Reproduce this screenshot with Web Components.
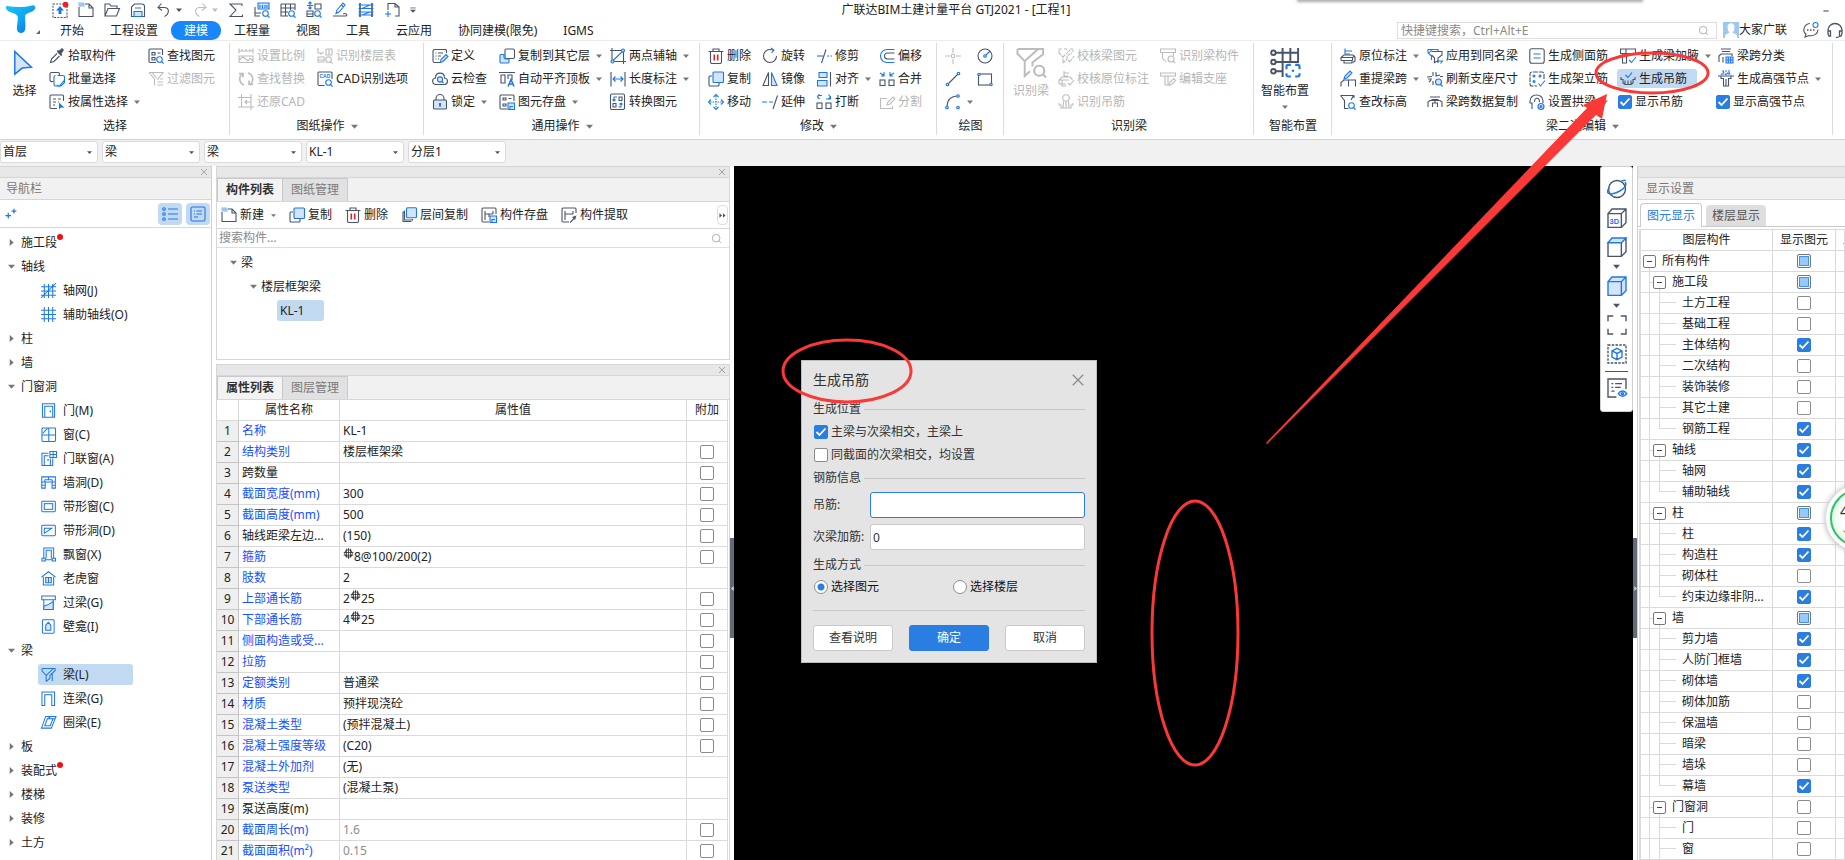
<!DOCTYPE html>
<html lang="zh-CN">
<head>
<meta charset="utf-8">
<title>广联达BIM土建计量平台 GTJ2021 - [工程1]</title>
<style>
body { margin: 0; }
</style>
</head>
<body>
<gtj-app></gtj-app>
<script>
/* ---------- icon shapes: 16x16 grid; b = accent stroke, f = tinted fill, s = solid accent, k = solid dark ---------- */
const MAG = '<circle class="b" cx="11.5" cy="11.5" r="2.8"/><path class="b" d="M13.6 13.6l2 2"/>';
const ICONS = {
  upload: '<rect x="1" y="2" width="14" height="13.5" stroke-dasharray="2 1.2"/><path class="s" d="M8 4l4 4.5H9.5V12h-3V8.500H4z"/><circle cx="13.500" cy="2.600" r="2.900" fill="#e8202a" stroke="none"/>',
  newfile: '<path d="M1 5v9.500h14V6l-4-4H7M11 2v4h4"/><path class="b" stroke-dasharray="1 1" stroke-width="1" d="M.5 1h5M1.500 2h5M.5 3h5M1.500 4h5"/>',
  open: '<path d="M1 14V2h4.500l1.500 2h6v2.500M1 14h11.500L15.500 6.500H4z"/>',
  save: '<path d="M1.500 14.500V5l3-3H12a2.500 2.500 0 0 1 2.500 2.500v10z"/><path class="b f" d="M4 14.500V9.500h8v5zM5 6h6"/>',
  undo: '<path d="M5.500 1.500L2 5.500l4 3M2.500 5.500H8c6 0 5.500 6.500.5 9"/>',
  redo: '<path d="M10.500 1.500L14 5.500l-4 3M13.500 5.500H8c-6 0-5.500 6.500-.5 9"/>',
  sigma: '<path d="M14 4V2H2l6 6-6 6.500h12.500v-2"/>',
  q1: '<path d="M1 5v9h5M1 11h6"/><path class="b f" d="M4 1h11v6H4zM6 3v3M8.500 3v3M11 3v3M13 3v3"/>' + MAG,
  q2: '<path d="M1 2h14v6M1 2v12h7M1 6h14M1 10h7M5.500 2v12M10.500 2v6"/>' + MAG,
  q3: '<path d="M9 2h6v5H9zM1 9h6v5.500H1zM1 12h6"/><path class="b" d="M4 0v7M1 3.500h6M2.500 1.500L4 0l1.500 1.500M2.500 5.500L4 7l1.500-1.500"/>' + MAG,
  q4: '<path d="M1 14h13c2.500-2-1-3-3-2"/><path class="b" d="M5 8l6-7 2 2-6 7-3 1.500zM9.500 3l2 2"/>',
  q5: '<path stroke-width="1.600" d="M2 1v14M14 1v14"/><path class="b" d="M.5 3h15M.5 6.500h15M.5 10h15M.5 13h15M12 3L4 6.500M12 10l-8 3"/>',
  q6: '<path d="M4 8V1.500h7l4 3.500v9h-4M11 1.500V5h4"/><path class="b" d="M4 9v6M1 12h6"/>',
  grip: '<path class="k" d="M0 12L12 12 12 0z"/>',
  cursor: '<path class="b f" stroke-width="1.600" d="M3 1.500L3 26 11 19.500 21 18.500z"/>',
  picker: '<path class="k" d="M8 4l4 4 1.500-1-1-1.500 2.500-3.500L13 0 10 2.500 8.500 2z"/><path d="M8 5.500L2.500 11l-1 3.500L5 13.500 10.500 8"/>',
  batch: '<path d="M4.500 10.500H3A1.500 1.500 0 0 1 1 9V3a1.500 1.500 0 0 1 1.500-1.500H9A1.500 1.500 0 0 1 10.500 3v1"/><path class="b" d="M8.500 4.500H14A1.500 1.500 0 0 1 15.500 6v5.500L12 15H6.500A1.500 1.500 0 0 1 5 13.500V6A1.500 1.500 0 0 1 6.500 4.500M8 14l2 1.500 5-6"/>',
  propselect: '<path d="M8 14.500H2a1 1 0 0 1-1-1V2a1 1 0 0 1 1-1h11.500a1 1 0 0 1 1 1v5M4 5h3M9 5h3M4 8h3M4 11h2M9 8h1"/><path class="s" d="M10 8.500v7l2-2 3.500.3z"/>',
  findelem: '<path d="M8 14.500H2a1 1 0 0 1-1-1V2a1 1 0 0 1 1-1h11.500a1 1 0 0 1 1 1v5M4 4.500h3v2.500H4zM4 9.500h3v2.500H4zM9.500 5h3"/>' + MAG,
  filter: '<path d="M1 1.500h14L10 8v1M1 1.500L6.500 8v6.500M9.500 11H15M9.500 14H15M12 8h3M4 1.500L8.500 7"/>',
  scale: '<path d="M1 3h14M1 .5v5M15 .5v5M1 14.500V8h14v6.500M1 14.500h14M1 12l4-3 5 4 2-3 3 3M4 1v2M8 1v2M12 1v2"/>',
  swap: '<path stroke-width="1.600" d="M6 14A6.500 6.500 0 0 1 4 3M1 2.500h4v4M10 2a6.500 6.500 0 0 1 2 11.500M15 13.500h-4v-4"/>',
  crop: '<path d="M3.500 0v13H16M0 3.500h13V16M0 13h3.500M13 0v3.500M7 8h6M9 6L7 8l2 2"/>',
  floorsheet: '<path d="M1 0v5h6M1 9h6v5H1zM9 1h6v6M9 1v6h6M12 1v6M1 12h6M4 5v2"/>' + MAG,
  cad: '<path d="M7.500 14.500H2a1 1 0 0 1-1-1V2a1 1 0 0 1 1-1h12a1 1 0 0 1 1 1v6"/><text x="2.500" y="7" font-size="5" font-weight="700">CAD</text>' + MAG,
  define: '<path d="M8 14.500H2.500a1.500 1.500 0 0 1-1.500-1.500V3a1.500 1.500 0 0 1 1.500-1.500h10A1.500 1.500 0 0 1 14.500 3v2M3.500 5h1M6 5h5M3.500 8h1M6 8h3M3.500 11h1M6 11h1"/><path class="b f" d="M8.500 14.500l.5-3 5-5 2 2-5 5z"/>',
  cloud: '<path d="M4 13.500C-.5 13-.3 7.500 3.500 7 3.500.5 12.500.5 12.500 7c4 .5 4 6 0 6.500z"/><circle class="b f" cx="8" cy="8.500" r="2.600"/><path class="b" d="M10 10.500l1.500 1.500"/>',
  lock: '<path d="M4 6V4.500a4 4 0 0 1 8 0V6"/><rect class="f" x="1.500" y="6" width="13" height="9" rx="1"/><path class="b" stroke-width="2" d="M8 9v3.500"/>',
  copyfloor: '<rect x="6" y="1" width="9.500" height="9.500" rx="1.500"/><path class="b f" d="M5 6.500H2A1 1 0 0 0 1 7.500V14a1 1 0 0 0 1 1h7a1 1 0 0 0 1-1v-3H6.500A1.500 1.500 0 0 1 5 9.500z"/>',
  aligntop: '<path d="M0 1.500h16M2 4h4v8H2zM9 8V4h4v5"/><path class="b" stroke-width="1.500" d="M9 15.500l3-7 3 7M10.500 13h3.500"/>',
  archive: '<path d="M8 15H2a1 1 0 0 1-1-1V2a1 1 0 0 1 1-1h12a1 1 0 0 1 1 1v5M4 4h3v2H4zM4 10h3v2H4zM9.500 4.500h3"/><path class="b f" d="M9 9h6.500v6.500H9zM11 15v-2.500h3"/>',
  axis2: '<path d="M2 0v15M13.500 1v15M0 2.500h15M1 13.500h15"/><path class="b" d="M2.500 13L13 3"/><circle class="b f" cx="13" cy="2.500" r="1.500"/><circle class="b f" cx="2.500" cy="13.500" r="1.500"/>',
  dimension: '<path d="M1 1v14.500M15 1v14.500"/><path class="b" d="M3 8h10M5.500 5.500L3 8l2.500 2.500M10.500 5.500L13 8l-2.500 2.500"/>',
  convert: '<path d="M2 0h11a1.500 1.500 0 0 1 1.500 1.500v12.500a1.500 1.500 0 0 1-1.500 1.500H2A1.500 1.500 0 0 1 .5 14V1.500A1.500 1.500 0 0 1 2 0zM9 3h3v3.500H9zM3 9.500h3V13H3z"/><path class="b" d="M7 3H4v4M2.500 5.500L4 7l1.500-1.500M8.500 13H11V9M9.500 10.500L11 9l1.500 1.500"/>',
  trash: '<path d="M.5 3.500h15M5 3V1h6v2M2.500 3.500V14a1.500 1.500 0 0 0 1.500 1.500h8a1.500 1.500 0 0 0 1.500-1.500V3.500"/><path style="stroke:#d9252f" stroke-width="1.600" d="M6.300 6.500v6M9.700 6.500v6"/>',
  copy: '<path d="M4 5H2a1 1 0 0 0-1 1v8a1 1 0 0 0 1 1h8a1 1 0 0 0 1-1v-2"/><rect class="b f" x="5" y="1" width="10.500" height="10.500" rx="1"/>',
  copylayers: '<path d="M3 5H2v9.500h8V14M4 4H3.500v9h8v-1"/><rect class="b f" x="5.500" y=".8" width="10" height="10" rx="1"/>',
  move: '<g class="b"><path stroke-dasharray="1.500 1" d="M8 2v12M2 8h12"/><path d="M5.500 3L8 .5 10.500 3M5.500 13L8 15.500l2.500-2.500M3 5.500L.5 8 3 10.500M13 5.500L15.500 8 13 10.500"/></g>',
  rotate: '<circle cx="8" cy="8" r="6.500" stroke-dasharray="33 8"/><path class="b" d="M9 0l3 2-2.500 3"/>',
  mirror: '<path class="b f" d="M9.500 1.500L15 14.500H9.500z"/><path d="M6.500 1.500L1 14.500h5.500z"/>',
  extend: '<path d="M15.500 1.500L11 15"/><path class="b" d="M0 8h5M7 8h4"/>',
  trim: '<path d="M10 1.500L5.500 15"/><path class="b" d="M1 8h6"/><path class="b" d="M11 8h2M14.500 8H16"/>',
  align: '<path d="M14.500 1v14.500"/><path class="b f" d="M3 1.500h8v5H3zM1.500 9.500H11V15H1.500z"/>',
  break: '<rect x="1" y="9" width="5" height="5.500"/><rect x="10" y="9" width="5" height="5.500"/><path class="b" d="M6 1.500H1.500M3.500 0L1.500 3l2 2M10 5h4.500V2M12.500 .5l2 2.500-2 2"/>',
  merge: '<rect x="1" y="9" width="5" height="5.500"/><rect x="10" y="9" width="5" height="5.500"/><path class="b" d="M1 2l4 2.500M5 1v4H2M15 2l-4 2.500M11 1v4h3"/>',
  offset: '<path d="M15.500 5H8.500a3 3 0 0 0 0 6h7"/><path class="b" d="M15.500 1.500H8a6.500 6.500 0 0 0 0 13h7.500"/>',
  split: '<path d="M8 4.500H1.500v10h12V12"/><path d="M8 11l1-3 5-5 2 2-5 5z"/>',
  point: '<path d="M8 0v5M8 11v5M0 8h5M11 8h5"/><circle cx="8" cy="8" r="1.800"/>',
  circle: '<circle cx="8" cy="8" r="7"/><path class="b" d="M9 7l4-4"/><circle class="b f" cx="8" cy="8" r="1.300"/>',
  line: '<path d="M2.500 13.500l11-11"/><circle class="b f" cx="2.500" cy="13.500" r="1.300"/><circle class="b f" cx="13.500" cy="2.500" r="1.300"/>',
  rect: '<rect x="1.500" y="3" width="13" height="11"/><circle class="b f" cx="2" cy="3.500" r="1.200"/><circle class="b f" cx="14" cy="13.500" r="1.200"/>',
  arc: '<path d="M2 12C2.500 5 6 2.500 11.500 2"/><circle class="b f" cx="2" cy="13.500" r="1.300"/><circle class="b f" cx="13" cy="2" r="1.300"/><circle class="b f" cx="13" cy="13.500" r="1.300"/>',
  beambig: '<path stroke-width="2" d="M1.500 2H28v5.500L17 16v4M1.500 2v5L9 14.500V30l5.500-5M9 14.500L23 2"/><circle stroke-width="2.200" cx="24" cy="24.500" r="5.200"/><path stroke-width="2.200" d="M28 28.500l3 3"/>',
  chkbeam: '<path d="M1 5V1h3M6 1h4M12 1h3v3M1 5l4 4v6M5 15l4-4M5 9l7-7M9 11V8l5-3M10 12l2 2 4-6" stroke-dasharray="3 .8"/>',
  chkmark: '<path d="M6 0v6M6 2h5M6 5h4M1 13V9l3-3h8l2 2v1M1 9h10M1 13h7M4 9v6h4M10 12l2 2 4-5"/>',
  hanger: '<circle cx="8" cy="4" r="3.300"/><path d="M8 7.500V14M1 9v2h2v3h10v-3h2V9M5.500 7.500L5 14M10.500 7.500L11 14"/>',
  beamcomp: '<path d="M.5 1h15v3.500H.5zM2.500 4.500V10L6 14M13.500 4.500V8"/><circle cx="11" cy="11" r="3"/><path d="M13 13l2 2"/>',
  editsupport: '<path d="M.5 2h15v3H.5zM5 5v9h3V5"/><path d="M9 14.500l.7-3 4-4 2 2-4 4z"/>',
  smart: '<path stroke-width="2" d="M6 6h24M6 15.500h24M6 25h7M13 1v30M21 1v14M29 1v14"/><circle stroke-width="2" cx="3.500" cy="6" r="2.300"/><circle stroke-width="2" cx="3.500" cy="15.500" r="2.300"/><circle stroke-width="2" cx="3.500" cy="25" r="2.300"/><rect fill="#fff" stroke="none" x="16" y="17.500" width="16" height="15"/><path class="b" stroke-width="2.200" d="M17 23v-2.500a2 2 0 0 1 2-2h2.500M26 18.500h2.500a2 2 0 0 1 2 2V23M30.500 27v1.500a2 2 0 0 1-2 2H26M21.500 30.500H19a2 2 0 0 1-2-2V27"/><circle class="s" cx="23.700" cy="24.500" r="1.300"/>',
  inplace: '<path class="b" d="M5 6.500V.5M5 3h7M5 6h5"/><path d="M1 12.500V9.500L4 7h9l2 2v4l-2 1.500M1 9.500h11.500M12.500 9.500v3M4 12.500V15h8v-2.500H1M12.500 9.500L15 8"/>',
  relift: '<path class="b f" d="M4 8l1-3 5-5 2 2-5 5z"/><path d="M1 15.500v-4L4 9h11.500v6.500M8.500 9v6.500"/>',
  level: '<path d="M.5 1.500h13L11 6M.5 1.500l4 5v8h4M14 1.500V4"/>' + MAG,
  applysame: '<path class="b" d="M1 5V1.500h10V4M1 5l3.500 3V12M5 1.500L2 5"/><path d="M4.500 3.500h10.500V7l-4 3v5M4.500 7l3 3v4.500l3-1.500"/><path class="b" d="M10 13h5.500l-2 2.500"/>',
  refresh: '<path d="M0 6l5-.5M6 5V1M9 1v4l4-1M4 9l-2 2M13 5.500h3M6 10v4M1 8h4"/><circle class="b f" cx="11.500" cy="11" r="3"/><path class="b" d="M13.600 13.500l2 2"/>',
  spancopy: '<path d="M3 3h10M4.500 5.500h7M1 13V8l2-1.500h10L15 8v5M5.500 13V9h5v4M8 6.500V9"/>',
  sidebar: '<rect x=".8" y=".8" width="14.400" height="14.400" rx="2"/><path class="b" d="M4.500 6h7M4.500 10h7"/>',
  erect: '<path d="M15 8V3a2 2 0 0 0-2-2H3a2 2 0 0 0-2 2v10a2 2 0 0 0 2 2h5" stroke-dasharray="5 1"/><g class="b f"><circle cx="5" cy="5" r="1"/><circle cx="11" cy="5" r="1"/><circle cx="5" cy="10.500" r="1"/></g><path class="b" d="M9.500 12.500l2 2.500L16 9.500"/>',
  arch: '<path d="M3 15V9H1V7C2-1 13-1 14 7v2M5.500 8c0-5 5-5 5 0"/><circle class="b f" cx="12" cy="12.500" r="3"/><circle class="b" cx="12" cy="12.500" r="1"/>',
  haunch: '<path d="M.5 1h15v4.500H.5zM2.500 5.500V15h4V9l3-3.500M6 1v4.500"/><path class="b" d="M9 12l2.500 2.500L16 9"/>',
  genhanger: '<path class="b" d="M5.500 4L8 6.500 12 1.500"/><path d="M1 6v2.500h2V12l2 1.500h6l2-1.500V8.500h2V6M5 9.500v4M8 9.500v4M11 9.500v4"/>',
  spanclass: '<path d="M3 1h10M4 3.500h8M1 14V8l2-2h11v2M5 14.500V9"/><path class="b f" d="M8 9h7v6H8zM8 12h7M10.300 9v6M12.700 9v6"/>',
  node: '<path class="b" stroke-dasharray="2 1" d="M4 0h9M4 3h9M3 4l2.500-3L8 4l2.500-3L13 4"/><path d="M0 5h16M3 5v2.500h2.500V15h5V7.500H13V5M8 8v7"/>',
  plus2: '<path class="b" stroke-width="1.500" d="M4 7v7M.5 10.500h7M11 2v6M8 5h6"/>',
  list: '<g class="b"><circle cx="2" cy="3" r="1.300"/><circle cx="2" cy="8" r="1.300"/><circle cx="2" cy="13" r="1.300"/><path d="M6 3h10M6 8h10M6 13h10"/></g>',
  card: '<rect class="b" x="1" y="1" width="14" height="14" rx="1.500"/><path class="b" d="M4 5h1M6.500 5H12M4 8h1M6.500 8H12M4 11h4"/>',
  axisnet: '<path class="b" d="M3.500 1v15M8 1v15M12.500 1v15M0 4h16M0 8.500h16M0 13h16M0 16L16 0"/>',
  axisaux: '<path class="b" d="M3.500 0v16M8 0v16M12.500 0v16M0 3.500h16M0 8h16M0 12.500h16"/>',
  door: '<path class="b" d="M1.500.8h13v14.400h-13zM4 15V3.500h8.500V15"/><circle class="s" cx="10" cy="9" r=".9"/>',
  window: '<rect class="b" x="1" y="1" width="14.500" height="14.500" rx="1"/><path class="b" d="M1 8.500h14.500M8.300 1v14.500M2 6.500L7 1.500"/>',
  doorwin: '<path class="b" d="M8 2.500H1v13h2.500V5H8M3.500 15.500h9V8M10 15V8M9.500.5h7v6.500h-7zM13 .5V7M9.500 3.700h7"/><circle class="s" cx="7.500" cy="9.500" r=".9"/>',
  wallhole: '<path class="b" d="M.8 2h14.500v12h-3.500V7.500H4.500V14H.8zM.8 7.500H4.500M11.800 7.500h3.500M8 2v3M4 5h8M4 5v2M12 5v2M.8 11h3.500M11.500 11h3.500"/>',
  stripwin: '<rect class="b" x=".8" y="2.500" width="14.500" height="11" rx="1"/><rect class="b" x="3.500" y="5" width="9" height="6"/>',
  striphole: '<rect class="b" x=".8" y="2.500" width="14.500" height="11" rx="1"/><path class="b" d="M3.500 11V5.500h8z"/>',
  baywin: '<path class="b" d="M3 12V1h10.500v11M5.500 12V3.500H11V12M1 12h3.500v3H1zM12 12h3.500v3H12zM5 13.500h7"/>',
  dormer: '<path class="b" d="M.5 6.500L8 .8l7.500 5.700M2.500 6v9h11V6"/><path class="b f" d="M5 7h6v5.500H5zM8 7v5.500"/>',
  lintel: '<path class="b" d="M.8 1h14.500v4H.8z"/><path class="b" d="M3 5v10.500h10V5"/><path class="b f" d="M3 12c4-1 7-3 10-5v8.500H3z"/>',
  niche: '<rect class="b" x="1.500" y=".8" width="12.500" height="14.400" rx="1"/><path class="b f" d="M5 12V6.500L7.800 3.500l2.700 3V12z"/>',
  beam: '<path class="b" d="M1 1.500h14v2.500L9.500 9M1 1.500V4l4.500 5v6.500M5.500 9l8-7.500M5.500 15.500l4-3.500V9M12 7v8"/>',
  coupling: '<path class="b" d="M1 15.500V1h13.500v14.500h-3V4H4v11.500z"/>',
  ring: '<path class="b" d="M5 1.500h11l-5 12.500H.5zM6.800 4h6l-3 7.500H4zM11 1.500L7 4M13 4l2 0"/>',
  orbit: '<circle cx="8" cy="8" r="6.800"/><path class="b" stroke-width="1.200" d="M14.500 2.500c2 3-2 6-5 7.500s-8 3-9 .8C0 9 1 8 2 7M15 1l-3.500.5"/>',
  c3d: '<path d="M.8 4.500h10.700v11H.8zM.8 4.500L4 .8h11.200v11l-3.700 3.700M11.500 4.500L15.200.8"/><text x="2" y="13" font-size="6" font-weight="700">3D</text>',
  cubetop: '<path d="M.8 4.500h10.700v11H.8zM15.200.8v11l-3.700 3.700M11.500 4.500L15.200.8"/><path class="b f" d="M.8 4.500L4 .8h11.200l-3.700 3.700z"/>',
  cubesolid: '<path class="b f" d="M.8 4.500L4 .8h11.200v11l-3.700 3.700H.8zM.8 4.500h10.700v11M11.500 4.500L15.200.8"/>',
  expand: '<path d="M.8 5V.8H5M11 .8h4.200V5M15.200 11v4.200H11M5 15.200H.8V11"/>',
  dashcube: '<rect x=".8" y=".8" width="14.400" height="14.400" stroke-dasharray="2 1"/><path class="b" d="M8 3.500l4 2v5l-4 2-4-2v-5zM4 5.500l4 2 4-2M8 7.500v5"/>',
  listeye: '<path d="M7.500 15.200H.8V.8h14.400v8M3.500 4.500H5M6.500 4.500H12M3.500 7.500H5M6.500 7.500H11M3.500 10.500H6"/><path class="b f" d="M9 12.500c2-2.800 5-2.800 6.800 0-1.800 2.800-4.800 2.800-6.800 0z"/><circle class="b" cx="12.400" cy="12.500" r=".8"/>',
  compsave: '<path d="M8 15H2a1 1 0 0 1-1-1V2a1 1 0 0 1 1-1h12a1 1 0 0 1 1 1v5M4 4v9M4 7h8M12 4v3M8 10V7"/><path class="b f" d="M9 9h6.500v6.500H9zM11 15v-2.500h3"/>',
  compget: '<path d="M8 15H2a1 1 0 0 1-1-1V2a1 1 0 0 1 1-1h12a1 1 0 0 1 1 1v4M4 4v9M4 7h8M12 4v3"/><path class="k" d="M11 10l3 3 1.500-4.500z"/><path d="M9 15.500l4-4"/>',
  search: '<circle cx="7.500" cy="7.500" r="5.500"/><path d="M11.500 11.500l3 3"/>',
  close: '<path stroke-width="1.400" d="M2 2l12 12M14 2L2 14"/>',
  minus: '<path stroke-width="3" d="M1 8h14"/>',
  more: '<path class="k" d="M1 3l6 5-6 5zM9 3l6 5-6 5z"/>',
  caret: '<path class="k" d="M0 4h16L8 13z"/>',
  caretr: '<path class="k" d="M4 0v16L13 8z"/>',
  caretl: '<path class="k" d="M12 0v16L3 8z"/>',
  qmore: '<path stroke-width="2" d="M1 2.500h14"/><path class="k" d="M0 7h16l-8 8z"/>',
  rebar: '<circle cx="8" cy="8" r="5.500"/><path d="M8 0v16M1 6.500h14M1 10.500h14M5 1v13M11 1v13"/>',
  chat: '<path d="M7 1.500C1 2-1 9 3 12l-1 3 4-1.500c5 1 9-2 9-6"/><path stroke-width="1.600" d="M4 8h1.500M7 8h1.500M10 8h1.500"/><circle class="b" cx="12.500" cy="3" r="2.500"/>',
  headset: '<path stroke-width="1.300" d="M1 12V8a7 6.500 0 0 1 14 0v4M1 9h2.500v5H2L1 12M15 9h-2.500v5H14l1-2M13 14c-1 1.500-2 1.500-4 1.500"/>'
};

/* ---------- shared helpers ---------- */
const BASE = `
  :host { display: block; box-sizing: border-box; }
  :host([hidden]) { display: none; }
  * { box-sizing: border-box; }
  button { font: inherit; color: inherit; background: none; border: 0; padding: 0; margin: 0; white-space: nowrap; }
  input[type=checkbox], input[type=radio] {
    appearance: none; width: 14px; height: 14px; margin: 0; flex: none; display: block;
    border: 1px solid #8c8c8c; border-radius: 2px; background: #fff center / 12px 12px no-repeat;
  }
  input[type=radio] { border-radius: 50%; }
  input[type=radio]:checked { background-image: radial-gradient(circle, #2a7de1 3px, #fff 4px); }
  input[type=checkbox]:checked {
    border-color: #2a7de1; background-color: #2a7de1;
    background-image: url("data:image/svg+xml,%3Csvg xmlns='http://www.w3.org/2000/svg' viewBox='0 0 12 12'%3E%3Cpath d='M1.500 6l3 3L10.500 2.500' fill='none' stroke='%23fff' stroke-width='1.800'/%3E%3C/svg%3E");
  }
  input[type=checkbox]:indeterminate { border-color: #6e7784; background: #9ac8fb; box-shadow: inset 0 0 0 1px #fff, inset 0 0 0 2px #3f92ef; }
`;
function define(name, css, render) {
  customElements.define(name, class extends HTMLElement {
    connectedCallback() {
      if (this.shadowRoot) return;
      const root = this.attachShadow({ mode: 'open' });
      root.innerHTML = `<style>${BASE}${css}</style>` + render(this);
      root.querySelectorAll('[data-mixed]').forEach(i => { i.indeterminate = true; });
    }
  });
}
const icon = (n, w = 16, box = 16, cls = '') =>
  `<app-icon name="${n}" size="${w}" box="${box}"${cls ? ` class="${cls}"` : ''}></app-icon>`;

define('app-icon', `
  :host { display: inline-block; flex: none; line-height: 0; }
  svg { display: block; fill: none; stroke: var(--ink, #4a5468); stroke-width: 1.100; overflow: visible; }
  .b { stroke: var(--accent, #1c78e8); }
  .f { fill: var(--tint, #d3e4fb); }
  .s { fill: var(--accent, #1c78e8); stroke: none; }
  .k { fill: var(--ink, #4a5468); stroke: none; }
  text { fill: var(--accent, #1c78e8); stroke: none; font-family: "Liberation Sans", sans-serif; }
`, el => {
  const s = +el.getAttribute('size') || 16, b = +el.getAttribute('box') || 16;
  return `<svg width="${s}" height="${s}" viewBox="0 0 ${b} ${b}" aria-hidden="true">${ICONS[el.getAttribute('name')] || ''}</svg>`;
});

/* ---------- title bar and tabs ---------- */
define('app-header', `
  :host { background: #fff; border-bottom: 1px solid #ececec; position: relative; }
  .edge { position: absolute; top: 0; right: 203px; width: 344px; height: 1px; background: #b9b9b9; box-shadow: 0 0 3px 1px #a5a5a5; }
  .wrap { display: grid; grid-template-columns: 47px 1fr; }
  .logo { display: flex; align-items: flex-end; padding: 0 0 6px 5px; gap: 0; }
  .grip { --ink: #666; }
  .top { display: grid; grid-template-columns: 373px 1fr 353px; height: 20px; align-items: center; }
  .quick { display: flex; gap: 10px; padding-left: 5px; align-items: center; }
  .quick button { display: flex; align-items: center; gap: 4px; }
  .quick .off { --ink: #bcbcbc; }
  h1 { margin: 0; font-size: 12px; font-weight: 400; text-align: center; line-height: 20px; }
  .win { display: flex; justify-content: flex-end; padding-right: 16px; }
  .row { display: flex; height: 20px; align-items: center; }
  nav { display: flex; }
  nav a { color: #222; text-decoration: none; padding: 0 13px; line-height: 19px; border-radius: 9px; white-space: nowrap; }
  nav a.on { background: #1787fb; color: #fff; }
  .right { margin-left: auto; display: flex; align-items: center; }
  .find { display: flex; align-items: center; width: 320px; height: 17px; border: 1px solid #dedede; padding: 0 7px 0 3px; --ink: #999; }
  .find input { flex: 1; min-width: 0; border: 0; padding: 0; font: inherit; line-height: 15px; outline: 0; background: none; }
  .find input::placeholder { color: #8a8a8a; opacity: 1; }
  .ava { display: block; margin-left: 6px; }
  .tools { display: flex; gap: 8px; margin-left: 16px; padding-right: 2px; }
`, () => {
  const quick = [['upload'], ['newfile'], ['open'], ['save'], ['undo', 1], ['redo', 1, 'off'], ['sigma'], ['q1'], ['q2'], ['q3'], ['q4'], ['q5'], ['q6']];
  const tabs = ['开始', '工程设置', '建模', '工程量', '视图', '工具', '云应用', '协同建模(限免)', 'IGMS'];
  return `<div class="edge"></div><div class="wrap">
    <div class="logo">
      <svg width="31" height="30" viewBox="0 0 31 30" role="img" aria-label="GTJ">
        <defs><linearGradient id="lg" x1="0" y1="0" x2="1" y2="1"><stop offset="0" stop-color="#19c4f5"/><stop offset=".5" stop-color="#0fa5f3"/><stop offset="1" stop-color="#0a6fdc"/></linearGradient></defs>
        <path fill="url(#lg)" d="M2 2c8 1.500 17 1.500 25-.5 4-1 4 4 1 5.500-4 2-7 2-8 5 0 5 1 9 0 14-1 4-7 4-8 0-.6-4 1.500-10 .5-14C11 9 5 8.500 3 7 1 5 0 2.500 2 2z"/>
      </svg>${icon('grip', 4, 12, 'grip')}
    </div>
    <div>
      <div class="top">
        <div class="quick">${quick.map(q => `<button aria-label="${q[0]}" class="${q[2] || ''}">${icon(q[0])}${q[1] ? icon('caret', 6) : ''}</button>`).join('')}<button aria-label="more">${icon('qmore', 6)}</button></div>
        <h1>广联达BIM土建计量平台 GTJ2021 - [工程1]</h1>
        <div class="win"><button aria-label="minimize">${icon('minus', 6)}</button></div>
      </div>
      <div class="row">
        <nav>${tabs.map(t => `<a href="#"${t === '建模' ? ' class="on"' : ''}>${t}</a>`).join('')}</nav>
        <div class="right">
          <label class="find"><input type="text" aria-label="快捷键搜索" placeholder="快捷键搜索，Ctrl+Alt+E">${icon('search', 11)}</label>
          <svg class="ava" width="16" height="16" viewBox="0 0 16 16" aria-hidden="true"><path fill="#9cc8f2" d="M0 0h16v16H0z"/><path fill="#fff" d="M4.500 5c0-5 7-5 7 0l-.5 3.500-1.500 2L14 13v3H2v-3l4.500-2.500-1.500-2z"/></svg>
          <span>大家广联</span>
          <div class="tools">${icon('chat')}${icon('headset')}</div>
        </div>
      </div>
    </div></div>`;
});

/* ---------- ribbon ---------- */
define('ribbon-button', `
  :host { display: flex; align-items: center; }
  button, label { display: flex; align-items: center; gap: 3px; line-height: 19px; white-space: nowrap; border-radius: 3px; }
  .caret { --ink: #777; margin-left: 3px; }
  :host([disabled]) { color: #b5b5b5; --ink: #bcbcbc; --accent: #bcbcbc; --tint: #fff; }
  :host([active]) button { background: #c2d9f2; padding: 0 10px 0 3px; margin-left: -3px; }
  label { margin-left: -2px; }
`, el => {
  const ic = el.getAttribute('icon');
  if (ic === 'check') return `<label><input type="checkbox" checked><slot></slot></label>`;
  return `<button${el.hasAttribute('disabled') ? ' disabled style="color:inherit"' : ''} aria-label="${el.textContent || ic}">${icon(ic)}<slot></slot>${el.hasAttribute('arrow') ? icon('caret', 6, 16, 'caret') : ''}</button>`;
});
define('ribbon-big', `
  :host { grid-row: 1 / span 3; text-align: center; }
  button { display: flex; flex-direction: column; align-items: center; gap: 3px; width: 100%; padding-top: 3px; line-height: 20px; }
  .pic { height: 31px; display: flex; align-items: center; }
  .caret { --ink: #777; }
  :host([disabled]) { color: #b5b5b5; --ink: #bcbcbc; --accent: #bcbcbc; }
`, el => `<button${el.hasAttribute('disabled') ? ' disabled style="color:inherit"' : ''}><span class="pic">${icon(el.getAttribute('icon'), +el.getAttribute('size'), +el.getAttribute('box'))}</span><slot></slot>${el.hasAttribute('arrow') ? icon('caret', 6, 16, 'caret') : ''}</button>`);
define('ribbon-group', `
  :host { flex: none; background: linear-gradient(#dcdcdc, #dcdcdc) right 2px / 1px 92px no-repeat; }
  .items { display: grid; grid-auto-flow: column; grid-template-rows: repeat(3, 23px); grid-template-columns: var(--cols); padding: 3px 0 0 var(--pad, 8px); }
  .label { display: flex; justify-content: center; align-items: center; gap: 6px; line-height: 26px; --ink: #777; }
`, el => `<div class="items"><slot></slot></div><div class="label">${el.getAttribute('label')}${el.hasAttribute('arrow') ? icon('caret', 7) : ''}</div>`);

/* each column is a list of "icon|text|flags"; flags: d disabled, a arrow, h highlighted */
const RIBBON = [
  { label: '选择', pad: 0, cols: '49px 99px 82px', big: ['cursor', '选择', 25, 27, ''], items: [['picker|拾取构件', 'batch|批量选择', 'propselect|按属性选择|a'], ['findelem|查找图元', 'filter|过滤图元|d', '']] },
  { label: '图纸操作', arrow: 1, cols: '79px 107px', items: [['scale|设置比例|d', 'swap|查找替换|d', 'crop|还原CAD|d'], ['floorsheet|识别楼层表|d', 'cad|CAD识别选项', '']] },
  { label: '通用操作', arrow: 1, cols: '67px 111px 90px', items: [['define|定义', 'cloud|云检查', 'lock|锁定|a'], ['copyfloor|复制到其它层|a', 'aligntop|自动平齐顶板|a', 'archive|图元存盘|a'], ['axis2|两点辅轴|a', 'dimension|长度标注|a', 'convert|转换图元']] },
  { label: '修改', arrow: 1, cols: '54px 54px 63px 58px', items: [['trash|删除', 'copy|复制', 'move|移动'], ['rotate|旋转', 'mirror|镜像', 'extend|延伸'], ['trim|修剪', 'align|对齐|a', 'break|打断'], ['offset|偏移', 'merge|合并', 'split|分割|d']] },
  { label: '绘图', cols: '32px 27px', items: [['point||d', 'line|', 'arc||a'], ['circle|', 'rect|', '']] },
  { label: '识别梁', pad: 0, cols: '54px 102px 94px', big: ['beambig', '识别梁', 31, 32, 'disabled'], items: [['chkbeam|校核梁图元|d', 'chkmark|校核原位标注|d', 'hanger|识别吊筋|d'], ['beamcomp|识别梁构件|d', 'editsupport|编辑支座|d', '']] },
  { label: '智能布置', pad: 0, cols: '62px 16px', big: ['smart', '智能布置', 31, 32, 'arrow'], items: [] },
  { label: '梁二次编辑', arrow: 1, cols: '87px 102px 91px 98px 115px', items: [['inplace|原位标注|a', 'relift|重提梁跨|a', 'level|查改标高'], ['applysame|应用到同名梁', 'refresh|刷新支座尺寸', 'spancopy|梁跨数据复制'], ['sidebar|生成侧面筋', 'erect|生成架立筋', 'arch|设置拱梁|a'], ['haunch|生成梁加腋|a', 'genhanger|生成吊筋|h', 'check|显示吊筋'], ['spanclass|梁跨分类', 'node|生成高强节点|a', 'check|显示高强节点']] }
];
define('app-ribbon', `
  :host { display: flex; background: #fff; border-bottom: 1px solid #d2d2d2; overflow: hidden; }
`, () => RIBBON.map(g => {
  const b = g.big ? `<ribbon-big icon="${g.big[0]}" size="${g.big[2]}" box="${g.big[3]}" ${g.big[4]}>${g.big[1]}</ribbon-big>` : '';
  const it = g.items.flat().map(s => {
    if (!s) return '<span></span>';
    const [ic, t, f = ''] = s.split('|');
    return `<ribbon-button icon="${ic}"${f.includes('d') ? ' disabled' : ''}${f.includes('a') ? ' arrow' : ''}${f.includes('h') ? ' active' : ''}>${t}</ribbon-button>`;
  }).join('');
  return `<ribbon-group label="${g.label}"${g.arrow ? ' arrow' : ''} style="--cols:${g.cols};--pad:${g.pad === 0 ? 0 : 8}px">${b}${it}</ribbon-group>`;
}).join(''));

/* ---------- context combos ---------- */
define('combo-box', `
  :host { width: 98px; height: 22px; display: grid; align-items: center; background: #fff; border: 1px solid #dadada; border-radius: 3px; --ink: #555; }
  select, app-icon { grid-area: 1 / 1; }
  select { appearance: none; border: 0; background: none; font: inherit; color: inherit; padding: 0 18px 0 2px; margin: 0; height: 20px; width: 100%; }
  app-icon { justify-self: end; margin-right: 5px; pointer-events: none; }
`, el => `<select aria-label="${el.getAttribute('name')}"><option>${el.getAttribute('value')}</option></select>${icon('caret', 5)}`);
define('context-bar', `:host { display: flex; gap: 4px; padding: 1px 0 3px; background: #f1f1f1; }`, () =>
  [['楼层', '首层'], ['构件大类', '梁'], ['构件类型', '梁'], ['构件', 'KL-1'], ['分层', '分层1']].map(c => `<combo-box name="${c[0]}" value="${c[1]}"></combo-box>`).join(''));

/* ---------- dock strip ---------- */
define('dock-strip', `
  :host { display: flex; height: 12px; align-items: center; justify-content: flex-end; padding-right: 3px; background: #e7e7e7; border: solid #d6d6d6; border-width: 1px 0; --ink: #888; }
  button { display: flex; }
`, el => el.hasAttribute('plain') ? '' : `<button aria-label="关闭">${icon('close', 8)}</button>`);

/* ---------- navigation ---------- */
const NAV = [
  ['施工段', 0, 1], ['轴线', 1], ['-axisnet', '轴网(J)'], ['-axisaux', '辅助轴线(O)'], ['柱', 0], ['墙', 0], ['门窗洞', 1],
  ['-door', '门(M)'], ['-window', '窗(C)'], ['-doorwin', '门联窗(A)'], ['-wallhole', '墙洞(D)'], ['-stripwin', '带形窗(C)'], ['-striphole', '带形洞(D)'], ['-baywin', '飘窗(X)'], ['-dormer', '老虎窗'], ['-lintel', '过梁(G)'], ['-niche', '壁龛(I)'],
  ['梁', 1], ['-beam', '梁(L)', 1], ['-coupling', '连梁(G)'], ['-ring', '圈梁(E)'], ['板', 0], ['装配式', 0, 1], ['楼梯', 0], ['装修', 0], ['土方', 0]
];
define('nav-panel', `
  :host { border-right: 1px solid #cfcfcf; background: #fff; overflow: hidden; }
  h2 { margin: 0; font-size: 12px; font-weight: 400; line-height: 21px; padding-left: 6px; background: #f1f1f1; color: #777; border-bottom: 1px solid #d6d6d6; }
  .bar { display: flex; align-items: center; height: 28px; padding: 0 1px 0 4px; border-bottom: 1px solid #d6d6d6; gap: 4px; }
  .bar button { display: flex; align-items: center; justify-content: center; width: 24px; height: 22px; border-radius: 4px; }
  .bar .on { background: #c2d9f2; }
  .bar .plus { width: 14px; margin-right: auto; }
  ul { list-style: none; margin: 0; padding: 2px 0 0; }
  li { height: 24px; display: flex; align-items: center; line-height: 21px; --ink: #777; }
  .root { padding-left: 8px; gap: 6px; }
  .dot { width: 6px; height: 6px; border-radius: 50%; background: #f40d0d; align-self: flex-start; margin: 4px 0 0 -6px; }
  .leaf { padding-left: 38px; }
  .leaf span { display: flex; align-items: center; gap: 7px; padding: 0 3px; width: 95px; height: 21px; border-radius: 3px; white-space: nowrap; }
  .leaf .on { background: #c2d9f2; }
`, () => `<dock-strip></dock-strip><h2>导航栏</h2>
  <div class="bar"><button class="plus" aria-label="添加">${icon('plus2', 13)}</button><button class="on" aria-label="列表">${icon('list')}</button><button class="on" aria-label="卡片">${icon('card')}</button></div>
  <ul>${NAV.map(n => n[0][0] === '-'
    ? `<li class="leaf"><span${n[2] ? ' class="on"' : ''}>${icon(n[0].slice(1), 15)}${n[1]}</span></li>`
    : `<li class="root">${icon(n[1] ? 'caret' : 'caretr', 7)}${n[0]}${n[2] ? '<i class="dot"></i>' : ''}</li>`).join('')}</ul>`);

/* ---------- tabs ---------- */
define('panel-tabs', `
  :host { display: flex; height: 24px; background: #f1f1f1; border-bottom: 1px solid #d6d6d6; }
  button { width: 66px; line-height: 22px; border: 1px solid #c9c9cc; border-bottom: 0; margin-right: -1px; color: #7a7a7a; background: #e1e1e1; }
  button.on { font-weight: 700; color: #333; background: #f3f3f3; }
`, el => el.getAttribute('tabs').split(',').map((t, i) => `<button${i ? '' : ' class="on"'}>${t}</button>`).join(''));

/* ---------- component list ---------- */
define('component-panel', `
  :host { border: 1px solid #d6d6d6; border-top: 0; background: #fff; height: 194px; margin-bottom: 4px; }
  .tools { display: flex; align-items: center; height: 27px; padding: 0 1px 0 4px; border-bottom: 1px solid #d6d6d6; }
  .tools button { display: flex; align-items: center; gap: 3px; line-height: 20px; margin-right: 13px; }
  .caret { --ink: #777; margin-left: 4px; }
  .tools .over { margin: 0 0 0 auto; border: 1px solid #dcdcdc; border-radius: 4px; width: 11px; height: 20px; justify-content: center; }
  .find { display: flex; align-items: center; height: 19px; padding: 0 7px 0 2px; border-bottom: 1px solid #dedede; --ink: #999; }
  .find input { flex: 1; border: 0; padding: 0; font: inherit; line-height: 16px; outline: 0; min-width: 0; }
  .find input::placeholder { color: #8a8a8a; opacity: 1; }
  ul { list-style: none; margin: 0; padding: 2px 0 0; }
  li { height: 24px; display: flex; align-items: center; gap: 4px; line-height: 21px; --ink: #777; }
  .l1 { padding-left: 13px; } .l2 { padding-left: 33px; } .l3 { padding-left: 60px; }
  .l3 span { width: 47px; padding-left: 3px; border-radius: 3px; background: #c2d9f2; }
`, () => `<dock-strip></dock-strip><panel-tabs tabs="构件列表,图纸管理"></panel-tabs>
  <div class="tools">
    <button>${icon('newfile')}新建${icon('caret', 5, 16, 'caret')}</button>
    <button>${icon('copy')}复制</button><button>${icon('trash')}删除</button><button>${icon('copylayers')}层间复制</button><button>${icon('compsave')}构件存盘</button><button>${icon('compget')}构件提取</button>
    <button class="over" aria-label="更多">${icon('more', 7)}</button>
  </div>
  <label class="find"><input type="text" aria-label="搜索构件" placeholder="搜索构件...">${icon('search', 11)}</label>
  <ul><li class="l1">${icon('caret', 7)}梁</li><li class="l2">${icon('caret', 7)}楼层框架梁</li><li class="l3"><span>KL-1</span></li></ul>`);

/* ---------- property grid: name, value, has checkbox, flags k = black name, g = gray value ---------- */
const PROPS = [
  ['名称', 'KL-1', 0], ['结构类别', '楼层框架梁', 1], ['跨数量', '', 1, 'k'], ['截面宽度(mm)', '300', 1], ['截面高度(mm)', '500', 1],
  ['轴线距梁左边...', '(150)', 1, 'k'], ['箍筋', '#8@100/200(2)', 1], ['肢数', '2', 0], ['上部通长筋', '2#25', 1], ['下部通长筋', '4#25', 1],
  ['侧面构造或受...', '', 1], ['拉筋', '', 1], ['定额类别', '普通梁', 1], ['材质', '预拌现浇砼', 1], ['混凝土类型', '(预拌混凝土)', 1], ['混凝土强度等级', '(C20)', 1],
  ['混凝土外加剂', '(无)', 0], ['泵送类型', '(混凝土泵)', 0], ['泵送高度(m)', '', 0, 'k'], ['截面周长(m)', '1.6', 1, 'g'], ['截面面积(m²)', '0.15', 1, 'g']
];
define('property-panel', `
  :host { border: solid #d6d6d6; border-width: 0 1px; background: #fff; overflow: hidden; }
  table { border-collapse: separate; border-spacing: 0; width: calc(100% - 1px); table-layout: fixed; }
  th, td { height: 21px; padding: 0 3px; line-height: 20px; font-weight: 400; border: solid #dadada; border-width: 0 1px 1px 0; white-space: nowrap; overflow: hidden; text-align: left; }
  thead th { text-align: center; }
  tbody th { background: #efefef; border-color: #c4c4c4; text-align: center; padding: 0; }
  td.n { color: #1650ff; } td.n.k { color: #222; } td.gray { color: #8c8c8c; }
  td.c input { margin: 0 auto; }
  app-icon { --ink: #222; vertical-align: 2px; }
`, () => `<dock-strip></dock-strip><panel-tabs tabs="属性列表,图层管理"></panel-tabs>
  <table><colgroup><col style="width:22px"><col style="width:101px"><col><col style="width:41px"></colgroup>
  <thead><tr><th></th><th>属性名称</th><th>属性值</th><th>附加</th></tr></thead>
  <tbody>${PROPS.map((p, i) => `<tr><th>${i + 1}</th><td class="n${p[3] === 'k' ? ' k' : ''}">${p[0]}</td><td${p[3] === 'g' ? ' class="gray"' : ''}>${p[1].replace('#', icon('rebar', 11))}</td><td class="c">${p[2] ? `<input type="checkbox" aria-label="附加 ${p[0]}">` : ''}</td></tr>`).join('')}</tbody></table>`);

/* ---------- splitter ---------- */
define('side-splitter', `
  :host { display: flex; flex-direction: column; background: #fff; }
  div { margin-top: 372px; height: 100px; background: #636b78; display: flex; align-items: center; --ink: #c8ccd2; }
`, el => `<div>${icon(el.getAttribute('dir') === 'l' ? 'caretl' : 'caretr', 5)}</div>`);

/* ---------- dialog ---------- */
define('hanger-dialog', `
  :host { position: absolute; left: 67px; top: 194px; width: 296px; padding: 7px 11px 11px; background: #e4e4e4; border: 1px solid #bdbdbd; color: #333; }
  header { display: flex; justify-content: space-between; align-items: center; height: 24px; margin-bottom: 7px; --ink: #888; }
  h2 { margin: 0; font-size: 14px; font-weight: 400; }
  header button { display: flex; }
  fieldset { border: 0; margin: 0; padding: 0; min-width: 0; }
  legend { display: flex; align-items: center; gap: 3px; width: 100%; padding: 0; line-height: 20px; }
  legend::after { content: ""; flex: 1; height: 1px; background: #c6c6c6; }
  .opt { display: flex; align-items: center; gap: 3px; height: 23px; padding-left: 1px; }
  .opts { padding: 1px 0 2px; }
  .field { display: grid; grid-template-columns: 57px 1fr; align-items: center; height: 32px; }
  .field input { width: 100%; height: 26px; border: 1px solid #c9c9c9; border-radius: 3px; padding: 0 2px; font: inherit; color: #333; background: #fff; outline: 0; }
  .field .focus { border-color: #2a7de1; }
  .fields { padding: 1px 0 2px; }
  .radios { display: grid; grid-template-columns: 139px 1fr; color: #111; border-bottom: 1px solid #c6c6c6; height: 36px; }
  footer { display: flex; justify-content: space-between; padding-top: 14px; }
  footer button { width: 80px; height: 26px; border: 1px solid #c9c9c9; border-radius: 3px; background: #fff; }
  footer .main { background: #2a7de1; border-color: #2a7de1; color: #fff; }
`, () => `<header><h2>生成吊筋</h2><button aria-label="关闭">${icon('close', 14)}</button></header>
  <fieldset><legend>生成位置</legend><div class="opts"><label class="opt"><input type="checkbox" checked>主梁与次梁相交，主梁上</label><label class="opt"><input type="checkbox">同截面的次梁相交，均设置</label></div></fieldset>
  <fieldset><legend>钢筋信息</legend><div class="fields"><label class="field"><span>吊筋:</span><input class="focus" type="text"></label><label class="field"><span>次梁加筋:</span><input type="text" value="0"></label></div></fieldset>
  <fieldset><legend>生成方式</legend><div class="radios"><label class="opt"><input type="radio" name="m" checked>选择图元</label><label class="opt"><input type="radio" name="m">选择楼层</label></div></fieldset>
  <footer><button>查看说明</button><button class="main">确定</button><button>取消</button></footer>`);

/* ---------- viewport ---------- */
define('view-toolbar', `
  :host { position: absolute; right: 0; top: 0; width: 33px; height: 246px; background: #fff; border: 1px solid #cfcfcf; border-radius: 3px; padding-top: 12px; }
  div { display: flex; flex-direction: column; align-items: center; }
  button { display: flex; margin-bottom: 9px; }
  .pre { margin-bottom: 4px; }
  .drop { margin-bottom: 4px; height: 11px; align-items: center; }
  hr { width: 23px; border: 0; border-top: 1px solid #4a5468; margin: -2px 0 6px; }
`, () => `<div>${[['orbit'], ['c3d'], ['cubetop', 1], ['cubesolid', 1], ['expand'], ['dashcube']].map(a =>
    `<button aria-label="${a[0]}"${a[1] ? ' class="pre"' : ''}>${icon(a[0], 20)}</button>${a[1] ? `<button class="drop" aria-label="展开">${icon('caret', 7)}</button>` : ''}`).join('')}<hr><button aria-label="显示列表">${icon('listeye', 20)}</button></div>`);
define('model-viewport', `:host { position: relative; background: #000; overflow: hidden; }`, () => `<hanger-dialog></hanger-dialog><view-toolbar></view-toolbar>`);

/* ---------- display settings: level, text, state (0 off, 1 on, 2 mixed), last of its branch ---------- */
const LAYERS = [
  [0, '所有构件', 2], [1, '施工段', 2], [2, '土方工程', 0], [2, '基础工程', 0], [2, '主体结构', 1], [2, '二次结构', 0], [2, '装饰装修', 0], [2, '其它土建', 0], [2, '钢筋工程', 1, 1],
  [1, '轴线', 1], [2, '轴网', 1], [2, '辅助轴线', 1, 1], [1, '柱', 2], [2, '柱', 1], [2, '构造柱', 1], [2, '砌体柱', 0], [2, '约束边缘非阴...', 1, 1],
  [1, '墙', 2], [2, '剪力墙', 1], [2, '人防门框墙', 1], [2, '砌体墙', 1], [2, '砌体加筋', 0], [2, '保温墙', 0], [2, '暗梁', 0], [2, '墙垛', 0], [2, '幕墙', 1, 1],
  [1, '门窗洞', 0], [2, '门', 0], [2, '窗', 0]
];
define('display-panel', `
  :host { border-left: 1px solid #cfcfcf; background: #fff; overflow: hidden; }
  h2 { margin: 0; font-size: 12px; font-weight: 400; line-height: 21px; padding-left: 8px; background: #f1f1f1; color: #777; border-bottom: 1px solid #d6d6d6; }
  .tabs { display: flex; gap: 4px; padding: 3px 0 0 2px; border-bottom: 1px solid #cacaca; align-items: flex-end; height: 27px; }
  .tabs button { height: 21px; width: 60px; border-radius: 4px 4px 0 0; background: #dedede; color: #555; }
  .tabs .on { height: 24px; width: 62px; background: #fff; color: #2a7de1; border: 1px solid #cacaca; border-bottom: 0; margin-bottom: -1px; }
  table { border-collapse: separate; border-spacing: 0; table-layout: fixed; width: 100%; border-left: 2px solid #dadada; border-top: 1px solid #dadada; }
  .box { padding: 2px 0 0 1px; }
  th, td { height: 21px; padding: 0; font-weight: 400; line-height: 20px; border: solid #dadada; border-width: 0 1px 1px 0; white-space: nowrap; overflow: hidden; }
  td input { margin: 0 auto !important; }
  .t { --line: linear-gradient(#dadada, #dadada); }
  .t0 { background: var(--line) 8px 16px / 1px 6px no-repeat; }
  .t1 { background: var(--line) 8px 0 / 1px 100% no-repeat, var(--line) 8px 10px / 4px 1px no-repeat, var(--line) 18px 16px / 1px 6px no-repeat; }
  .t2 { background: var(--line) 8px 0 / 1px 100% no-repeat, var(--line) 18px 0 / 1px 100% no-repeat, var(--line) 18px 9px / 17px 1px no-repeat; padding-left: 41px; }
  .t2.e { background: var(--line) 8px 0 / 1px 100% no-repeat, var(--line) 18px 0 / 1px 9px no-repeat, var(--line) 18px 9px / 17px 1px no-repeat; }
  .node { display: flex; align-items: center; gap: 6px; }
  .t0 .node { padding-left: 2px; } .t1 .node { padding-left: 12px; }
  .exp { width: 13px; height: 13px; border: 1px solid #777; border-radius: 2px; background: linear-gradient(#444, #444) center / 5px 1px no-repeat, #fff; }
  th.cut { text-align: left; padding-left: 7px; }
`, () => `<dock-strip plain></dock-strip><h2>显示设置</h2>
  <div class="tabs"><button class="on">图元显示</button><button>楼层显示</button></div>
  <div class="box"><table><colgroup><col style="width:132px"><col style="width:63px"><col></colgroup>
  <thead><tr><th>图层构件</th><th>显示图元</th><th class="cut">显示名称</th></tr></thead>
  <tbody>${LAYERS.map(l => `<tr><td class="t t${l[0]}${l[3] ? ' e' : ''}">${l[0] < 2 ? `<div class="node"><button class="exp" aria-label="折叠 ${l[1]}"></button>${l[1]}</div>` : l[1]}</td><td><input type="checkbox" aria-label="显示 ${l[1]}"${l[2] === 1 ? ' checked' : l[2] === 2 ? ' data-mixed' : ''}></td><td></td></tr>`).join('')}</tbody></table></div>`);

/* ---------- floating speed badge and red markup ---------- */
define('speed-badge', `
  :host { position: absolute; right: -43px; top: 489px; width: 58px; height: 58px; border-radius: 50%; border: 2px solid #2cc665; background: radial-gradient(circle, #fff 45%, #c9f5d3 100%); box-shadow: 0 0 0 4px #fff, 0 0 5px 6px #ccc; padding: 10px 0 0 8px; overflow: hidden; }
  b { display: block; font-weight: 400; font-size: 16px; line-height: 20px; color: #333; }
  i { display: block; font-style: normal; font-size: 12px; line-height: 16px; color: #15a845; }
`, () => `<b>4</b><i>↓</i>`);
define('markup-layer', `
  :host { position: absolute; inset: 0; pointer-events: none; overflow: hidden; }
  svg { display: block; width: 100%; height: 100%; fill: none; stroke: #fa3836; stroke-width: 3; }
  path { fill: #fa3836; stroke: none; }
`, () => `<svg aria-hidden="true"><ellipse cx="1652" cy="73" rx="56" ry="20"/><ellipse cx="847" cy="371" rx="64" ry="31"/><ellipse cx="1195" cy="633" rx="43" ry="132"/><path d="M1266 443L1587 108 1583 105 1607 94 1602 119 1596 115 1267 444z"/></svg>`);

/* ---------- application frame ---------- */
define('gtj-app', `
  :host { display: grid; grid-template-rows: auto auto auto 1fr; height: 100vh; position: relative; overflow: hidden; background: #fff; color: #222; cursor: default;
    font: 12px/20px "Noto Sans", "Noto Sans CJK SC", sans-serif; }
  main { display: grid; grid-template-columns: 212px 4px 514px 4px minmax(0, 1fr) 4px 208px; min-height: 0; overflow: hidden; }
  .mid { grid-column: 3; display: flex; flex-direction: column; min-height: 0; overflow: hidden; }
  component-panel { flex: none; }
  property-panel { flex: 1; min-height: 0; }
`, () => `<app-header></app-header><app-ribbon></app-ribbon><context-bar></context-bar>
  <main><nav-panel></nav-panel><section class="mid"><component-panel></component-panel><property-panel></property-panel></section>
  <side-splitter dir="l"></side-splitter><model-viewport></model-viewport><side-splitter dir="r"></side-splitter><display-panel></display-panel></main>
  <speed-badge></speed-badge><markup-layer></markup-layer>`);
</script>
</body>
</html>
